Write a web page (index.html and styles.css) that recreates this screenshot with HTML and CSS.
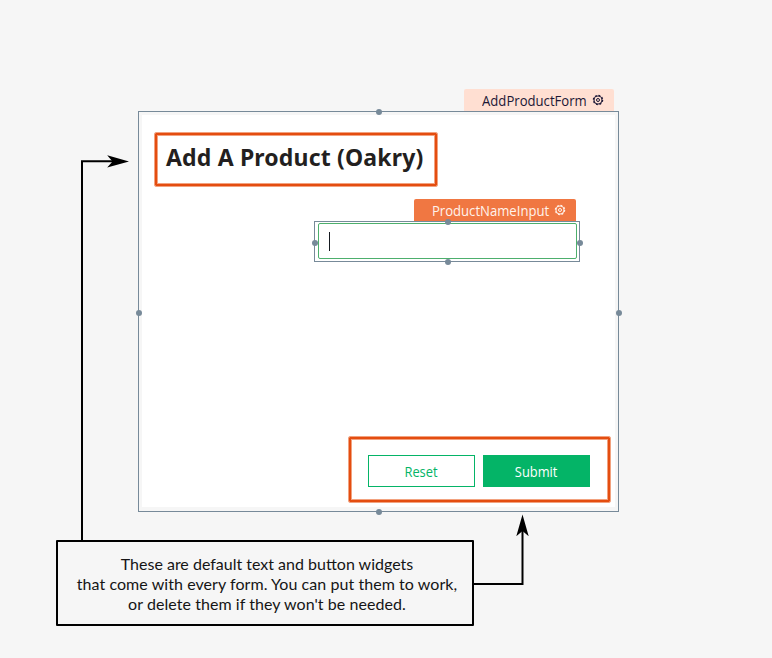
FILE: index.html
```html
<!DOCTYPE html>
<html lang="en">
<head>
<meta charset="utf-8">
<title>Add A Product</title>
<link rel="stylesheet" href="styles.css">
</head>
<body>
<main class="page">
  <div class="tag tag-form"><span class="tag-name">AddProductForm</span>
    <svg class="gear" viewBox="0 0 12 12"><circle class="teeth" cx="6" cy="6" r="4.6"/><circle class="ring" cx="6" cy="6" r="4"/><circle class="hub" cx="6" cy="6" r="1.5"/></svg>
  </div>
  <section class="form selection">
    <div class="form-body">
      <div class="highlight title-frame"><h1><span class="title-text">Add A Product (Oakry)</span></h1></div>
      <div class="tag tag-input"><span class="tag-name">ProductNameInput</span>
        <svg class="gear" viewBox="0 0 12 12"><circle class="teeth" cx="6" cy="6" r="4.6"/><circle class="ring" cx="6" cy="6" r="4"/><circle class="hub" cx="6" cy="6" r="1.5"/></svg>
      </div>
      <div class="selection field">
        <div class="input"><span class="caret"></span></div>
        <i class="dot top"></i><i class="dot right"></i><i class="dot bottom"></i><i class="dot left"></i>
      </div>
      <div class="highlight actions">
        <button class="btn reset"><span class="btn-text">Reset</span></button>
        <button class="btn submit"><span class="btn-text">Submit</span></button>
      </div>
    </div>
    <i class="dot top"></i><i class="dot right"></i><i class="dot bottom"></i><i class="dot left"></i>
  </section>
  <aside class="note">
    <span class="line">These are default text and button widgets</span>
    <span class="line wide">that come with every form. You can put them to work,</span>
    <span class="line wide">or delete them if they won't be needed.</span>
  </aside>
  <svg class="arrows" viewBox="0 0 772 658">
    <path class="wire" d="M82 541V161.3H118M473 584H522.5V530"/>
    <path d="M129 161.4L107.2 155.3L112.5 161.4L107.2 167.5ZM522.5 514.5L516.3 536.3L522.5 531L528.7 536.3Z"/>
  </svg>
</main>
</body>
</html>
```
FILE: styles.css
```css
* { box-sizing: border-box; }
body { margin: 0; background: #f6f6f6; font-family: "Open Sans", "Noto Sans", sans-serif; }
.page { position: relative; width: 772px; height: 658px; padding-top: 89px; overflow: hidden; }
.tag { display: flex; align-items: center; justify-content: flex-end; height: 22px; font-size: 14px; border-radius: 2px 2px 0 0; }
.tag-name { white-space: nowrap; line-height: 22px; padding-top: 2px; transform: scaleX(0.937); transform-origin: right; }
.tag-form { width: 150px; margin-left: 464px; padding-right: 10px; background: #ffdfd2; color: #1c1736; }
.tag-input { width: 162px; margin: 13px 0 0 272px; padding-right: 10px; background: #f07742; color: #fff3ec; }
.gear { width: 12px; height: 12px; margin-left: 5px; flex: none; fill: none; stroke: currentColor; }
.teeth { stroke-width: 1.3; stroke-dasharray: 1.81 1.8; }
.ring { stroke-width: 1.1; }
.hub { stroke-width: 1; }
.selection { position: relative; border: 1px solid #778a99; }
.form { width: 481px; height: 401px; margin-left: 138px; padding: 3px 3px 4px; }
.form-body { display: flex; flex-direction: column; height: 392px; background: #fff; }
.highlight { border: 2px solid #e44d10; outline: 1px solid #f2a27f; border-radius: 1px; box-shadow: inset 0 0 0 1px #f2a27f; }
.title-frame { width: 282px; height: 53px; margin: 18px 0 0 13px; padding-left: 9px; }
h1 { margin: 0; color: #231f20; font: 700 23px/44px "Noto Sans", sans-serif; white-space: nowrap; }
.title-text { letter-spacing: 0.17px; }
.field { width: 266px; height: 41px; margin-left: 172px; padding: 1px 2px 2px 3px; }
.input { height: 36px; padding: 8px 0 0 10px; border: 1px solid #4daf6d; border-radius: 2px; }
.caret { display: block; width: 1px; height: 19px; background: #151a20; }
.dot { position: absolute; width: 6px; height: 6px; border-radius: 50%; background: #778a99; }
.top { left: calc(50% - 3px); top: -3px; }
.bottom { left: calc(50% - 3px); bottom: -4px; }
.left { left: -3px; top: calc(50% - 2px); }
.right { right: -4px; top: calc(50% - 2px); }
.field > .top, .field > .bottom { left: 130px; }
.form > .left, .form > .right { top: 198px; }
.actions { display: flex; gap: 8px; width: 261px; height: 65px; margin: auto 0 5px 207px; padding: 16px 0 0 17px; }
.btn { width: 107px; height: 32px; padding: 2px 0 0; border: 1px solid #04b467; border-radius: 0; font: 14px/28px "Open Sans", sans-serif; text-align: center; }
.btn-text { display: inline-block; transform: scaleX(0.92); }
.reset { background: #fff; color: #04b467; }
.submit { background: #04b467; color: #fff; }
.note { display: flex; flex-direction: column; align-items: center; width: 418px; height: 86px; margin: 28px 0 0 56px; padding: 12px 0 0 4px; border: 2px solid #000; border-radius: 1px; color: #151515; font: 16px/20px Lato, sans-serif; }
.line { white-space: nowrap; }
.wide { letter-spacing: 0.06px; font-variant-ligatures: common-ligatures; }
.arrows { position: absolute; left: 0; top: 0; width: 772px; height: 658px; pointer-events: none; }
.wire { fill: none; stroke: #000; stroke-width: 2; }
```
